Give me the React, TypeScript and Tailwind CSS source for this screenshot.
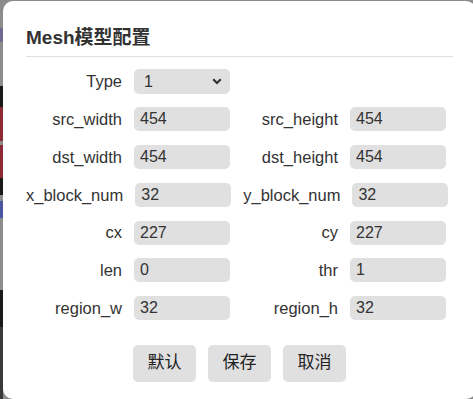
const rows: [string, string, string?, string?][] = [
  ['src_width', '454', 'src_height', '454'],
  ['dst_width', '454', 'dst_height', '454'],
  ['x_block_num', '32', 'y_block_num', '32'],
  ['cx', '227', 'cy', '227'],
  ['len', '0', 'thr', '1'],
  ['region_w', '32', 'region_h', '32'],
];

// dimmed page showing through at the left edge
const strip = [
  ['#8c8c8c', 28],
  ['#6f6a8f', 14],
  ['#8c8c8c', 44],
  ['#1a1a1a', 21],
  ['#8e2a35', 34],
  ['#8c8c8c', 4],
  ['#8e2a35', 33],
  ['#1a1a1a', 17],
  ['#8c8c8c', 6],
  ['#4a56a0', 17],
  ['#8c8c8c', 72],
  ['#1a1a1a', 37],
  ['#3a3a3a', 72],
] as const;

function Field({ label, value }: { label: string; value: string }) {
  return (
    <div className="flex items-center gap-[12px]">
      <span className="min-w-[96px] whitespace-nowrap text-right text-[16.5px]">{label}</span>
      <input
        readOnly
        value={value}
        className="h-[24px] w-[96px] rounded-[5px] bg-[#e0e0e0] px-[6px] text-[16px] text-[#333] outline-none"
      />
    </div>
  );
}

export default function App() {
  return (
    <div
      className="flex h-[399px] w-[473px] overflow-hidden bg-[#8c8c8c] text-[16px] text-[#333]"
      style={{ fontFamily: '"Liberation Sans", Arial, "Noto Sans CJK SC", sans-serif' }}
    >
      <div className="flex w-[3px] shrink-0 flex-col">
        {strip.map(([c, h], i) => (
          <div key={i} className="shrink-0" style={{ backgroundColor: c, height: h }} />
        ))}
      </div>

      <div className="mt-[1px] h-[398px] w-[473px] shrink-0 rounded-[10px] bg-white px-[23px] pt-[26px]">
        <h2 className="border-b border-[#e0e0e0] pb-[7px] text-[19px] font-bold leading-[22px] text-[#333]">
          Mesh模型配置
        </h2>

        <div className="mt-[12px] flex flex-col gap-[13px]">
          <div className="flex items-center gap-[12px]">
            <span className="min-w-[96px] text-right text-[16.5px]">Type</span>
            <div className="relative h-[25px] w-[96px]">
              <select className="h-full w-full appearance-none rounded-[5px] bg-[#e0e0e0] pl-[10px] text-[16px] text-[#333] outline-none">
                <option>1</option>
              </select>
              <svg
                className="pointer-events-none absolute right-[8px] top-[9px]"
                width="10"
                height="7"
                viewBox="0 0 10 7"
              >
                <path d="M1.2 1.2 5 5 8.8 1.2" fill="none" stroke="#333" strokeWidth="2.2" />
              </svg>
            </div>
          </div>

          {rows.map(([l1, v1, l2, v2]) => (
            <div key={l1} className="flex items-center gap-[12px]">
              <Field label={l1} value={v1} />
              {l2 && <Field label={l2} value={v2 ?? ''} />}
            </div>
          ))}
        </div>

        <div className="mt-[24px] flex justify-center gap-[12px]">
          {['默认', '保存', '取消'].map((t) => (
            <button
              key={t}
              className="h-[37px] w-[63px] rounded-[5px] bg-[#e0e0e0] text-[17px] text-[#222]"
            >
              {t}
            </button>
          ))}
        </div>
      </div>
    </div>
  );
}
